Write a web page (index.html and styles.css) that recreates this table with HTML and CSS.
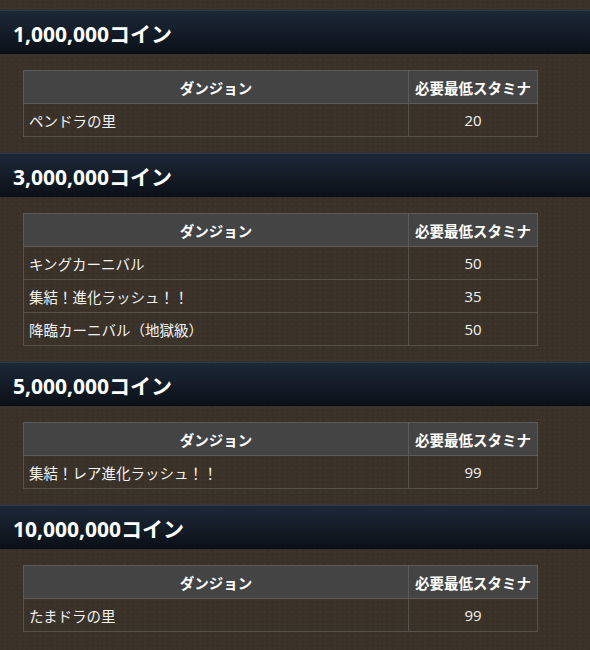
FILE: index.html
```html
<!DOCTYPE html>
<html lang="ja">
<head>
<meta charset="utf-8">
<link rel="stylesheet" href="styles.css">
</head>
<body>
<main class="page">
  <section class="block">
    <h2 class="title">1,000,000コイン</h2>
    <table class="tbl">
      <thead><tr><th class="c-name">ダンジョン</th><th class="c-st">必要最低スタミナ</th></tr></thead>
      <tbody>
        <tr><td>ペンドラの里</td><td class="num">20</td></tr>
      </tbody>
    </table>
  </section>
  <section class="block">
    <h2 class="title">3,000,000コイン</h2>
    <table class="tbl">
      <thead><tr><th class="c-name">ダンジョン</th><th class="c-st">必要最低スタミナ</th></tr></thead>
      <tbody>
        <tr><td>キングカーニバル</td><td class="num">50</td></tr>
        <tr><td>集結！進化ラッシュ！！</td><td class="num">35</td></tr>
        <tr><td>降臨カーニバル（地獄級）</td><td class="num">50</td></tr>
      </tbody>
    </table>
  </section>
  <section class="block">
    <h2 class="title">5,000,000コイン</h2>
    <table class="tbl">
      <thead><tr><th class="c-name">ダンジョン</th><th class="c-st">必要最低スタミナ</th></tr></thead>
      <tbody>
        <tr><td>集結！レア進化ラッシュ！！</td><td class="num">99</td></tr>
      </tbody>
    </table>
  </section>
  <section class="block">
    <h2 class="title">10,000,000コイン</h2>
    <table class="tbl">
      <thead><tr><th class="c-name">ダンジョン</th><th class="c-st">必要最低スタミナ</th></tr></thead>
      <tbody>
        <tr><td>たまドラの里</td><td class="num">99</td></tr>
      </tbody>
    </table>
  </section>
</main>
</body>
</html>
```
FILE: styles.css
```css
html, body {
  margin: 0;
  padding: 0;
}
body {
  background-color: #3b3229;
  background-image:
    radial-gradient(rgba(0,0,0,0.06) 1px, transparent 1.5px),
    radial-gradient(rgba(255,255,255,0.02) 1px, transparent 1.5px);
  background-size: 5px 4px, 7px 6px;
  background-position: 0 0, 2px 3px;
  font-family: "Open Sans", "Noto Sans CJK JP", sans-serif;
  color: #fff;
}
.page {
  padding-top: 10px;
  display: flex;
  flex-direction: column;
  gap: 16px;
}
.block {
  display: flex;
  flex-direction: column;
  gap: 16px;
}
.title {
  margin: 0;
  height: 43px;
  border-top: 1px solid #2a3a52;
  background: linear-gradient(to bottom, #1d2838 0%, #0b1017 100%);
  display: flex;
  align-items: center;
  padding-left: 13px;
  font-size: 21px;
  font-weight: 700;
  color: #fff;
}
.tbl {
  margin-left: 23px;
  width: 515px;
  border-collapse: collapse;
  font-size: 14.5px;
}
.tbl th, .tbl td {
  border: 1px solid #56514b;
  height: 33px;
  padding: 0 5px;
  box-sizing: border-box;
}
.tbl th {
  background: #444444;
  border-color: #5b5b5b;
  font-weight: 700;
  text-align: center;
}
.c-name { width: 386px; }
.c-st { width: 129px; padding: 0 2px; white-space: nowrap; }
.tbl td { text-align: left; color: #f2f2f2; }
.tbl td.num { text-align: center; font-size: 15px; }
```
